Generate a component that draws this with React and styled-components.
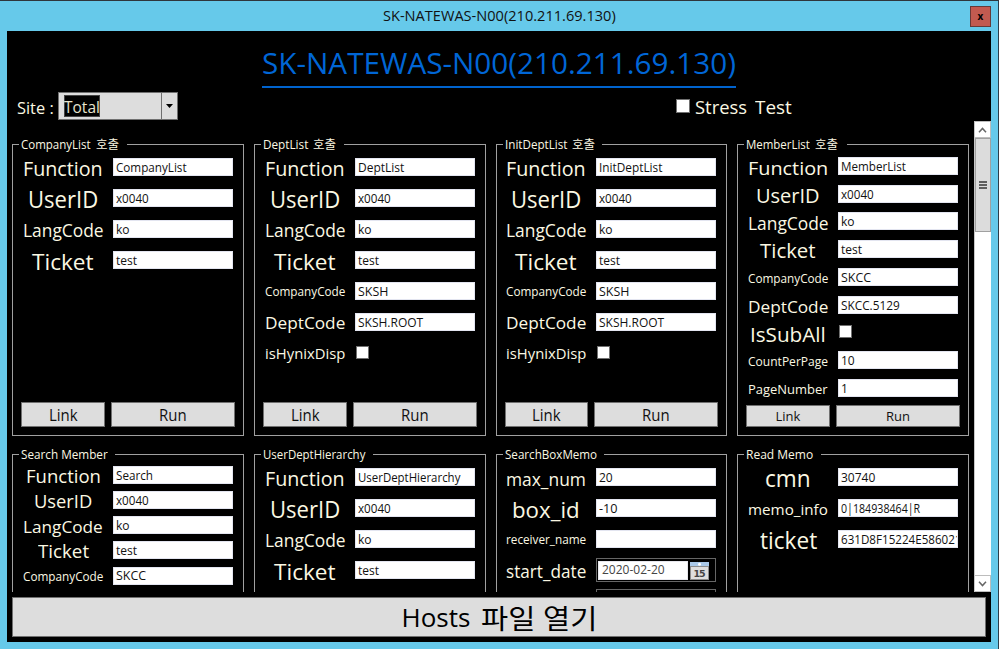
import React, { useLayoutEffect, useRef, useState } from "react";
import styled, { createGlobalStyle } from "styled-components";

const GlobalStyle = createGlobalStyle`
  * { box-sizing: border-box; }
  html, body { margin: 0; padding: 0; background: #2b3138; overflow: hidden; }
  body { font-family: "Open Sans", "Noto Sans CJK KR", sans-serif; }
  button { font-family: inherit; padding: 0; }
`;

const ivory = "#fbf8e3";

/* Text stretched horizontally to a set width, like a view box. */
const FitFrame = styled.span`
  display: inline-block;
  flex: none;
  width: ${(p) => (p.$width ? `${p.$width}px` : "auto")};
  font-size: ${(p) => p.$size}px;
  line-height: 1.2;
  white-space: nowrap;
  text-align: left;
`;
const FitInner = styled.span`
  display: inline-block;
  transform-origin: 0 50%;
`;
function Fit({ width, size, children }) {
  const ref = useRef(null);
  const [scale, setScale] = useState(1);
  useLayoutEffect(() => {
    if (width && ref.current) setScale(width / ref.current.offsetWidth);
  }, [width]);
  return (
    <FitFrame $width={width} $size={size}>
      <FitInner ref={ref} style={{ transform: `scaleX(${scale})` }}>{children}</FitInner>
    </FitFrame>
  );
}

const Window = styled.div`
  width: 999px;
  height: 649px;
  background: #66c9ea;
  border-top: 1px solid #2f363c;
  border-right: 1px solid #2b3e4a;
  padding: 0 7px 7px;
  display: flex;
  flex-direction: column;
`;
const TitleBar = styled.header`
  height: 30px;
  flex: none;
  display: grid;
  grid-template-columns: 21px 1fr 21px;
  align-items: center;
  color: #111;
`;
const WindowTitle = styled.div`
  grid-column: 2;
  display: flex;
  justify-content: center;
`;
const CloseButton = styled.button`
  width: 21px;
  height: 21px;
  border: 1px solid #673a38;
  background: #c25a50;
  color: #000;
  font-size: 10px;
  font-weight: 700;
  line-height: 15px;
`;
const Client = styled.main`
  flex: 1;
  min-height: 0;
  background: #000;
  display: flex;
  flex-direction: column;
  color: ${ivory};
`;
const HostLink = styled.a`
  align-self: center;
  margin: 14px 0 0;
  height: 43px;
  border-bottom: 2px solid #0063ce;
  color: #0066d6;
`;
const Toolbar = styled.div`
  height: 33px;
  flex: none;
  padding: 4px 0 0 10px;
  display: flex;
  align-items: flex-start;
`;
const SiteLabel = styled.label`
  padding-top: 5px;
  width: 41px;
`;
const Combo = styled.div`
  width: 120px;
  height: 28px;
  border: 1px solid #707070;
  background: #ddd;
  display: flex;
`;
const ComboValue = styled.div`
  flex: 1;
  padding: 2px 5px;
`;
const Selected = styled.span`
  display: flex;
  align-items: center;
  width: 36px;
  height: 22px;
  padding-top: 2px;
  background: #000;
  box-shadow: inset 0 0 0 1px #444;
  color: #e6e4ce;
`;
const ComboArrow = styled.div`
  width: 16px;
  border-left: 1px solid #707070;
  display: flex;
  align-items: center;
  justify-content: center;
`;
const StressToggle = styled.label`
  margin-left: 498px;
  height: 28px;
  display: flex;
  align-items: center;
  gap: 5px;
`;
const StressText = styled.span`
  display: flex;
  gap: 8px;
  padding-top: 2px;
`;
const CheckBox = styled.span`
  display: block;
  flex: none;
  width: ${(p) => p.$size || 13}px;
  height: ${(p) => p.$size || 13}px;
  border: 1px solid #707070;
  background: #fff;
`;
const Scroller = styled.section`
  height: 471px;
  flex: none;
  padding-left: 5px;
  display: flex;
  overflow: hidden;
`;
const Board = styled.div`
  flex: 1;
  padding-top: 23px;
  display: grid;
  grid-template-columns: 232px 232px 231px 232px;
  grid-template-rows: 292px 292px;
  gap: 18px 10px;
`;
const ScrollBar = styled.div`
  width: 17px;
  height: 471px;
  background: #fff;
  border-left: 1px solid #c8c8c8;
  display: flex;
  flex-direction: column;
`;
const ScrollArrow = styled.div`
  height: 17px;
  border: 1px solid #bdbdbd;
  border-left: 0;
  display: flex;
  align-items: center;
  justify-content: center;
`;
const ScrollThumb = styled.div`
  height: 94px;
  border: 1px solid #a0a0a0;
  background: #dcdcdc;
  display: flex;
  align-items: center;
  justify-content: center;
`;
const ScrollTrack = styled.div`
  flex: 1;
`;
const GroupFrame = styled.div`
  border: 1px solid #a0a0a0;
  border-top: 0;
  padding-bottom: 8px;
  display: flex;
  flex-direction: column;
`;
const Caption = styled.div`
  height: 21px;
  flex: none;
  margin: -10px 0 -11px;
  display: flex;
  align-items: center;
  &::before,
  &::after {
    content: "";
    height: 1px;
    background: #a0a0a0;
  }
  &::before { width: 6px; margin-right: 2px; }
  &::after { flex: 1; margin-left: ${(p) => p.$tail}px; }
`;
const CaptionText = styled.span`
  display: flex;
  gap: 5px;
  padding-top: 2px;
`;
const Fields = styled.div`
  padding: ${(p) => p.$top}px 0 0 ${(p) => p.$left}px;
`;
const Field = styled.div`
  height: ${(p) => p.$pitch}px;
  display: flex;
  align-items: center;
  gap: 10px;
`;
const FieldLabel = styled.div`
  width: 80px;
  height: 27px;
  padding-top: ${(p) => p.$drop}px;
  display: flex;
  align-items: center;
  justify-content: center;
`;
const TextBox = styled.div`
  width: 120px;
  height: 18px;
  border: 1px solid #e3e5f0;
  background: #fff;
  color: #111;
  padding: 2px 0 0 2px;
  display: flex;
  align-items: center;
  overflow: hidden;
`;
const CheckSlot = styled.div`
  width: 120px;
  padding: 0 1px 1px;
`;
const DateBox = styled.div`
  width: 120px;
  height: 24px;
  border: 1px solid #666;
  padding: 2px 1px 1px;
  display: flex;
  align-items: center;
  gap: 2px;
`;
const DateText = styled.div`
  width: 90px;
  height: 19px;
  background: #fff;
  color: #444;
  padding-left: 3px;
  display: flex;
  align-items: center;
  border: 1px solid #e8e8ee;
`;
const CalendarIcon = styled.svg`
  width: 19px;
  height: 18px;
  display: block;
`;
const Actions = styled.div`
  margin-top: auto;
  padding-left: 8px;
  display: flex;
  gap: 6px;
`;
const PushButton = styled.button`
  width: ${(p) => p.$width}px;
  height: ${(p) => p.$height}px;
  border: 1px solid #707070;
  background: #ddd;
  color: #111;
  padding-top: 2px;
  display: flex;
  align-items: center;
  justify-content: center;
`;
const HostsButton = styled(PushButton)`
  margin: 5px 0 0 5px;
  flex: none;
  gap: 10px;
  color: #000;
`;

/* Each field: label, label font size, label width, value, value width. */
const functionField = (v, w) => ["Function", 19.2, 80, v, w];
const user = ["UserID", 23, 70, "x0040", 33];
const lang = ["LangCode", 17.6, 81, "ko", 14];
const ticket = ["Ticket", 22.6, 62, "test", 21];
const company = (v) => ["CompanyCode", 12.2, 80, v, 30];
const dept = (v, w) => ["DeptCode", 16.6, 80, v, w];
const hynix = ["isHynixDisp", 15, 80, "check", 0, 0];

const groups = [
  { title: ["CompanyList", 70], call: true, tail: 8, actions: 25, fields: [functionField("CompanyList", 71), user, lang, ticket] },
  { title: ["DeptList", 45], call: true, tail: 8, actions: 25,
    fields: [functionField("DeptList", 46), user, lang, ticket, company("SKSH"), dept("SKSH.ROOT", 65), hynix] },
  { title: ["InitDeptList", 62], call: true, tail: 7, actions: 25, left: 9, linkWidth: 83,
    fields: [functionField("InitDeptList", 63), user, lang, ticket, company("SKSH"), dept("SKSH.ROOT", 65), hynix] },
  { title: ["MemberList", 64], call: true, tail: 9, actions: 22, pitch: 27.75, top: 8.1,
    fields: [
      ["Function", 18.6, 80, "MemberList", 65],
      ["UserID", 20, 64, "x0040", 33],
      lang,
      ["Ticket", 20.4, 56, "test", 21, 2],
      company("SKCC"),
      dept("SKCC.5129", 59),
      ["IsSubAll", 20.4, 76, "check"],
      ["CountPerPage", 12.2, 80, "10", 14],
      ["PageNumber", 12.8, 80, "1", 7],
    ] },
  { title: ["Search Member", 87], tail: 7, pitch: 25.15, top: 8.4,
    fields: [
      ["Function", 17.8, 75, "Search", 37],
      ["UserID", 18, 58, "x0040", 33],
      ["LangCode", 17.2, 80, "ko", 14],
      ["Ticket", 18, 51, "test", 21, 2],
      company("SKCC"),
    ] },
  { title: ["UserDeptHierarchy", 102], tail: 8,
    fields: [functionField("UserDeptHierarchy", 102), user, lang, ticket] },
  { title: ["SearchBoxMemo", 92], tail: 7, left: 9,
    fields: [
      ["max_num", 17.4, 80, "20", 14],
      ["box_id", 22.6, 68, "-10", 19],
      ["receiver_name", 12.2, 80, "", 0],
      ["start_date", 17.6, 80, "date", 0],
      ["", 17.6, 0, "frame", 0],
    ] },
  { title: ["Read Memo", 67], tail: 8,
    fields: [
      ["cmn", 23.6, 46, "30740", 34, 2],
      ["memo_info", 15.2, 80, "0|184938464|R", 79],
      ["ticket", 23, 57, "631D8F15224E586021", 121],
    ] },
];

function Editor({ value, width }) {
  if (value === "check") return <CheckSlot><CheckBox /></CheckSlot>;
  if (value === "frame") return <DateBox />;
  if (value === "date")
    return (
      <DateBox>
        <DateText><Fit size={12} width={63}>2020-02-20</Fit></DateText>
        <CalendarIcon viewBox="0 0 19 18">
          <rect x="0" y="0" width="19" height="18" fill="#8d8d8d" />
          <rect x="0" y="0" width="19" height="4" fill="#a9c8e8" />
          <circle cx="9.5" cy="2.2" r="1.5" fill="#fff" />
          <rect x="1" y="5" width="17" height="12" fill="#dedede" />
          <text x="9.5" y="15" textAnchor="middle" fontFamily="DejaVu Sans" fontWeight="700" fontSize="9.5" textLength="12" fill="#444">15</text>
        </CalendarIcon>
      </DateBox>
    );
  return <TextBox>{value && <Fit size={12} width={width}>{value}</Fit>}</TextBox>;
}

function Group({ title, call, tail, fields, pitch = 31, top = 7.5, left = 10, actions, linkWidth = 84 }) {
  const small = actions < 25;
  return (
    <GroupFrame>
      <Caption $tail={tail}>
        <CaptionText>
          <Fit size={12} width={title[1]}>{title[0]}</Fit>
          {call && <Fit size={12} width={23}>호출</Fit>}
        </CaptionText>
      </Caption>
      <Fields $top={top} $left={left}>
        {fields.map(([label, size, labelWidth, value, valueWidth, drop]) => (
          <Field key={label} $pitch={pitch}>
            <FieldLabel $drop={drop ?? (size > 17 || pitch < 31 ? 4 : 2)}>
              {label && <Fit size={size} width={labelWidth}>{label}</Fit>}
            </FieldLabel>
            <Editor value={value} width={valueWidth} />
          </Field>
        ))}
      </Fields>
      {actions && (
        <Actions>
          <PushButton $width={linkWidth} $height={actions}><Fit size={small ? 13 : 15.5} width={small ? 25 : 29}>Link</Fit></PushButton>
          <PushButton $width={124} $height={actions}><Fit size={small ? 13 : 15.5} width={small ? 24 : 28}>Run</Fit></PushButton>
        </Actions>
      )}
    </GroupFrame>
  );
}

export default function App() {
  return (
    <>
      <GlobalStyle />
      <Window>
        <TitleBar>
          <WindowTitle><Fit size={14.4} width={233}>SK-NATEWAS-N00(210.211.69.130)</Fit></WindowTitle>
          <CloseButton>x</CloseButton>
        </TitleBar>
        <Client>
          <HostLink><Fit size={30} width={474}>SK-NATEWAS-N00(210.211.69.130)</Fit></HostLink>
          <Toolbar>
            <SiteLabel><Fit size={15.5} width={37}>Site :</Fit></SiteLabel>
            <Combo>
              <ComboValue><Selected><Fit size={15.5} width={36}>Total</Fit></Selected></ComboValue>
              <ComboArrow>
                <svg width="7" height="4" viewBox="0 0 7 4"><path d="M0 0h7L3.5 4z" fill="#000" /></svg>
              </ComboArrow>
            </Combo>
            <StressToggle>
              <CheckBox $size={14} />
              <StressText>
                <Fit size={18.4} width={52}>Stress</Fit>
                <Fit size={18.4} width={37}>Test</Fit>
              </StressText>
            </StressToggle>
          </Toolbar>
          <Scroller>
            <Board>{groups.map((g) => <Group key={g.title[0]} {...g} />)}</Board>
            <ScrollBar>
              <ScrollArrow>
                <svg width="9" height="6" viewBox="0 0 9 6"><path d="M1 5.2 4.5 1.4 8 5.2" fill="none" stroke="#666" strokeWidth="1.5" /></svg>
              </ScrollArrow>
              <ScrollThumb>
                <svg width="8" height="8" viewBox="0 0 8 8"><path d="M0 1h8M0 4h8M0 7h8" stroke="#606060" strokeWidth="2" /></svg>
              </ScrollThumb>
              <ScrollTrack />
              <ScrollArrow>
                <svg width="9" height="6" viewBox="0 0 9 6"><path d="M1 .8 4.5 4.6 8 .8" fill="none" stroke="#666" strokeWidth="1.5" /></svg>
              </ScrollArrow>
            </ScrollBar>
          </Scroller>
          <HostsButton $width={974} $height={40}>
            <Fit size={26} width={69}>Hosts</Fit>
            <Fit size={27.5} width={116}>파일 열기</Fit>
          </HostsButton>
        </Client>
      </Window>
    </>
  );
}
